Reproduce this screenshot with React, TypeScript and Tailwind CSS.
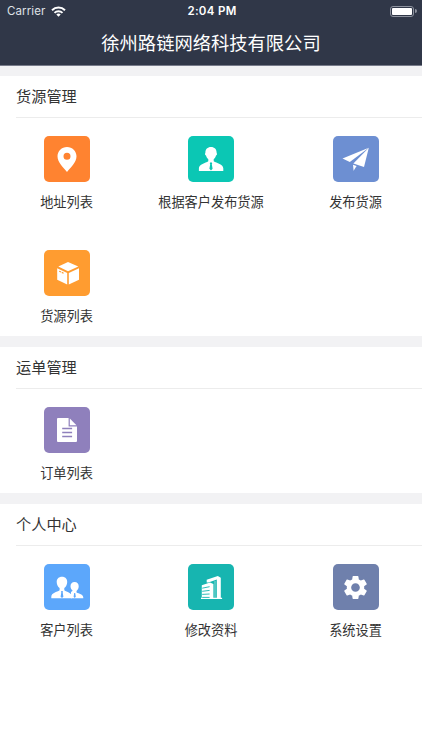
import type { ReactNode } from "react";
import { MdSettings } from "react-icons/md";

type Item = {
  label: string;
  color: string;
  icon: ReactNode;
};

function Icon({ children }: { children: ReactNode }) {
  return (
    <svg viewBox="0 0 46 46" className="size-[46px]" fill="white">
      {children}
    </svg>
  );
}

const PinIcon = (
  <Icon>
    <path
      fillRule="evenodd"
      d="M23 11c-5.3 0-9.5 4.1-9.5 9.3 0 6.1 6 11.2 9.5 15.8 3.500-4.600 9.500-9.700 9.500-15.800 0-5.200-4.200-9.300-9.500-9.300zm0 5.800a3.500 3.500 0 1 1 0 7 3.500 3.500 0 0 1 0-7z"
    />
  </Icon>
);

const PersonIcon = (
  <Icon>
    <path d="M23 11c3.500 0 5.600 2.300 5.600 5.500 0 .5.4.8.4 1.500s-.5 1.300-1 1.500c-.5 1.700-1.300 2.900-2.300 3.700v2c2.900 2.100 9.600 2.500 9.600 7.400V35H10.900v-2.400c0-4.900 6.700-5.300 9.400-7.400v-2c-1-.8-1.800-2-2.300-3.700-.5-.2-1-.8-1-1.500s.4-1 .4-1.500C17.400 13.300 19.500 11 23 11z" />
    <path fill="#0bc7b4" d="M22.100 26.500h1.800l.3 1-.4.8.8 4.500-1.600 1.700-1.600-1.700.8-4.500-.4-.8z" />
  </Icon>
);

const PlaneIcon = (
  <Icon>
    <path d="M35.800 11.800 9.500 22.400l7.300 3.600z" />
    <path d="M35.800 11.800 20.400 27.400l10.600 3.600z" />
    <path d="M20 28.800l3.600 1.300-3 4.700z" />
  </Icon>
);

const BoxIcon = (
  <Icon>
    <path d="M24 12l10.300 4.500L24 21.300l-9.700-4.800z" />
    <path d="M13.200 18.200l10 4.700v11.600l-10-4.800z" />
    <path d="M35 18.200v11.500l-10.200 4.800V22.900z" />
    <path d="M15.200 21.200l4.600 2.100" stroke="#ff9c30" strokeWidth="1.200" strokeDasharray="2 .8" />
  </Icon>
);

const DocIcon = (
  <Icon>
    <path d="M14 11h10.600v8.600H33V34a1 1 0 0 1-1 1H14a1 1 0 0 1-1-1V12a1 1 0 0 1 1-1z" />
    <path d="M25.800 11.400l6.700 6.900h-6.700z" />
    <path d="M18.200 21.500h9.900M18.200 25.500h9.900M18.200 29.500h9.900" stroke="#8f80bc" strokeWidth="1.500" />
  </Icon>
);

const PeopleIcon = (
  <Icon>
    <path d="M30.600 18c2.600 0 4.100 1.700 4.100 4.200 0 1.900-.9 3.600-2.200 4.700v1.500c2.400 1.200 6.800 1.500 6.800 5.200v.7H27V28l1.700-1.300c-1.400-1.100-2.200-2.600-2.200-4.500 0-2.500 1.500-4.200 4.100-4.200z" />
    <path d="M18 12.700c3.300 0 5.200 2.200 5.200 5.200 0 2.500-1.200 4.900-2.900 6.200v2.200c2.600 1.900 7.700 2.200 7.700 6.800v1.200H7.300v-1.200c0-4.600 5.700-4.900 8.300-6.800v-2.200c-1.700-1.300-2.900-3.700-2.900-6.200 0-3 2-5.200 5.300-5.200z" />
    <path fill="#5ca7fb" d="M17.300 27h1.400l.2 1-.2.600.7 4.100-1.400 1.400-1.400-1.400.7-4.100-.2-.6zM30.200 29h1l.6 3.800-1.100 1.200-1.100-1.200z" />
  </Icon>
);

const BuildingIcon = (
  <Icon>
    <path d="M18.700 18.400v-2.600L29.800 12l3 1.800v19.900h1.300V35h-5.300V15.400l-8.400 3z" />
    <path d="M13.800 21.200l8.200-2.700 3.400 1.500v13.700h3.600V35H13v-1.300h.8z" />
    <path
      d="M14.200 24.200l7.400-1.500M14.200 27.300l7.400-.9M14.200 30.400l7.400-.4M14.200 33.400h7.400"
      stroke="#17b5b0"
      strokeWidth=".9"
    />
    <path d="M27 17v16.800" stroke="white" strokeWidth=".5" />
  </Icon>
);

const sections: { title: string; items: Item[] }[] = [
  {
    title: "货源管理",
    items: [
      { label: "地址列表", color: "bg-[#ff8330]", icon: PinIcon },
      { label: "根据客户发布货源", color: "bg-[#0bc7b4]", icon: PersonIcon },
      { label: "发布货源", color: "bg-[#6d8fd2]", icon: PlaneIcon },
      { label: "货源列表", color: "bg-[#ff9c30]", icon: BoxIcon },
    ],
  },
  {
    title: "运单管理",
    items: [{ label: "订单列表", color: "bg-[#8f80bc]", icon: DocIcon }],
  },
  {
    title: "个人中心",
    items: [
      { label: "客户列表", color: "bg-[#5ca7fb]", icon: PeopleIcon },
      { label: "修改资料", color: "bg-[#17b5b0]", icon: BuildingIcon },
      {
        label: "系统设置",
        color: "bg-[#6f80ac]",
        icon: <MdSettings className="size-[29px] text-white" />,
      },
    ],
  },
];

function StatusBar() {
  return (
    <div className="grid h-[22px] grid-cols-3 items-center pl-[7px] pr-[5px] font-['Inter','Liberation_Sans',sans-serif] text-[11.5px] leading-[14px]">
      <div className="flex items-center gap-[6px]">
        <span className="tracking-[0.1px] text-[#dfe1e6]">Carrier</span>
        <svg viewBox="0 0 15 11" className="h-[11px] w-[15px]" fill="none" stroke="white" strokeWidth="2">
          <path d="M1 4.200a9.300 9.300 0 0 1 13 0M3.500 6.900a5.700 5.700 0 0 1 8 0" />
          <path d="M7.500 10.800 5.300 8.600a3.100 3.100 0 0 1 4.400 0z" fill="white" stroke="none" />
        </svg>
      </div>
      <span className="text-center font-semibold tracking-[0.3px]">2:04 PM</span>
      <div className="flex items-center justify-end gap-px">
        <div className="h-[11px] w-6 rounded-[3px] border border-[#8d929e] p-px">
          <div className="h-full rounded-[1px] bg-white" />
        </div>
        <div className="h-1 w-[2px] rounded-r-full bg-[#8d929e]" />
      </div>
    </div>
  );
}

export default function App() {
  return (
    <div className="min-h-screen bg-white font-['Noto_Sans_CJK_SC',sans-serif] text-[#333]">
      <header className="h-[66px] border-b border-[#777b8a] bg-[#303748] text-white">
        <StatusBar />
        <h1 className="text-center text-[18.3px] leading-10 font-normal">徐州路链网络科技有限公司</h1>
      </header>

      {sections.map((section) => (
        <section key={section.title} className="border-t-[11px] border-[#f2f2f4] first-of-type:border-t-[10px]">
          <h2 className="ml-4 h-[42px] border-b border-[#ececec] text-[15.2px] leading-[39px]">
            {section.title}
          </h2>
          <div className="grid grid-cols-[133px_156px_133px] gap-y-[10px]">
            {section.items.map((item) => (
              <div key={item.label} className="flex h-[104px] flex-col items-center pt-[18px]">
                <div className={`flex size-[46px] items-center justify-center rounded-[5px] ${item.color}`}>
                  {item.icon}
                </div>
                <span className="mt-[10px] text-[13.2px] leading-5">{item.label}</span>
              </div>
            ))}
          </div>
        </section>
      ))}
    </div>
  );
}
